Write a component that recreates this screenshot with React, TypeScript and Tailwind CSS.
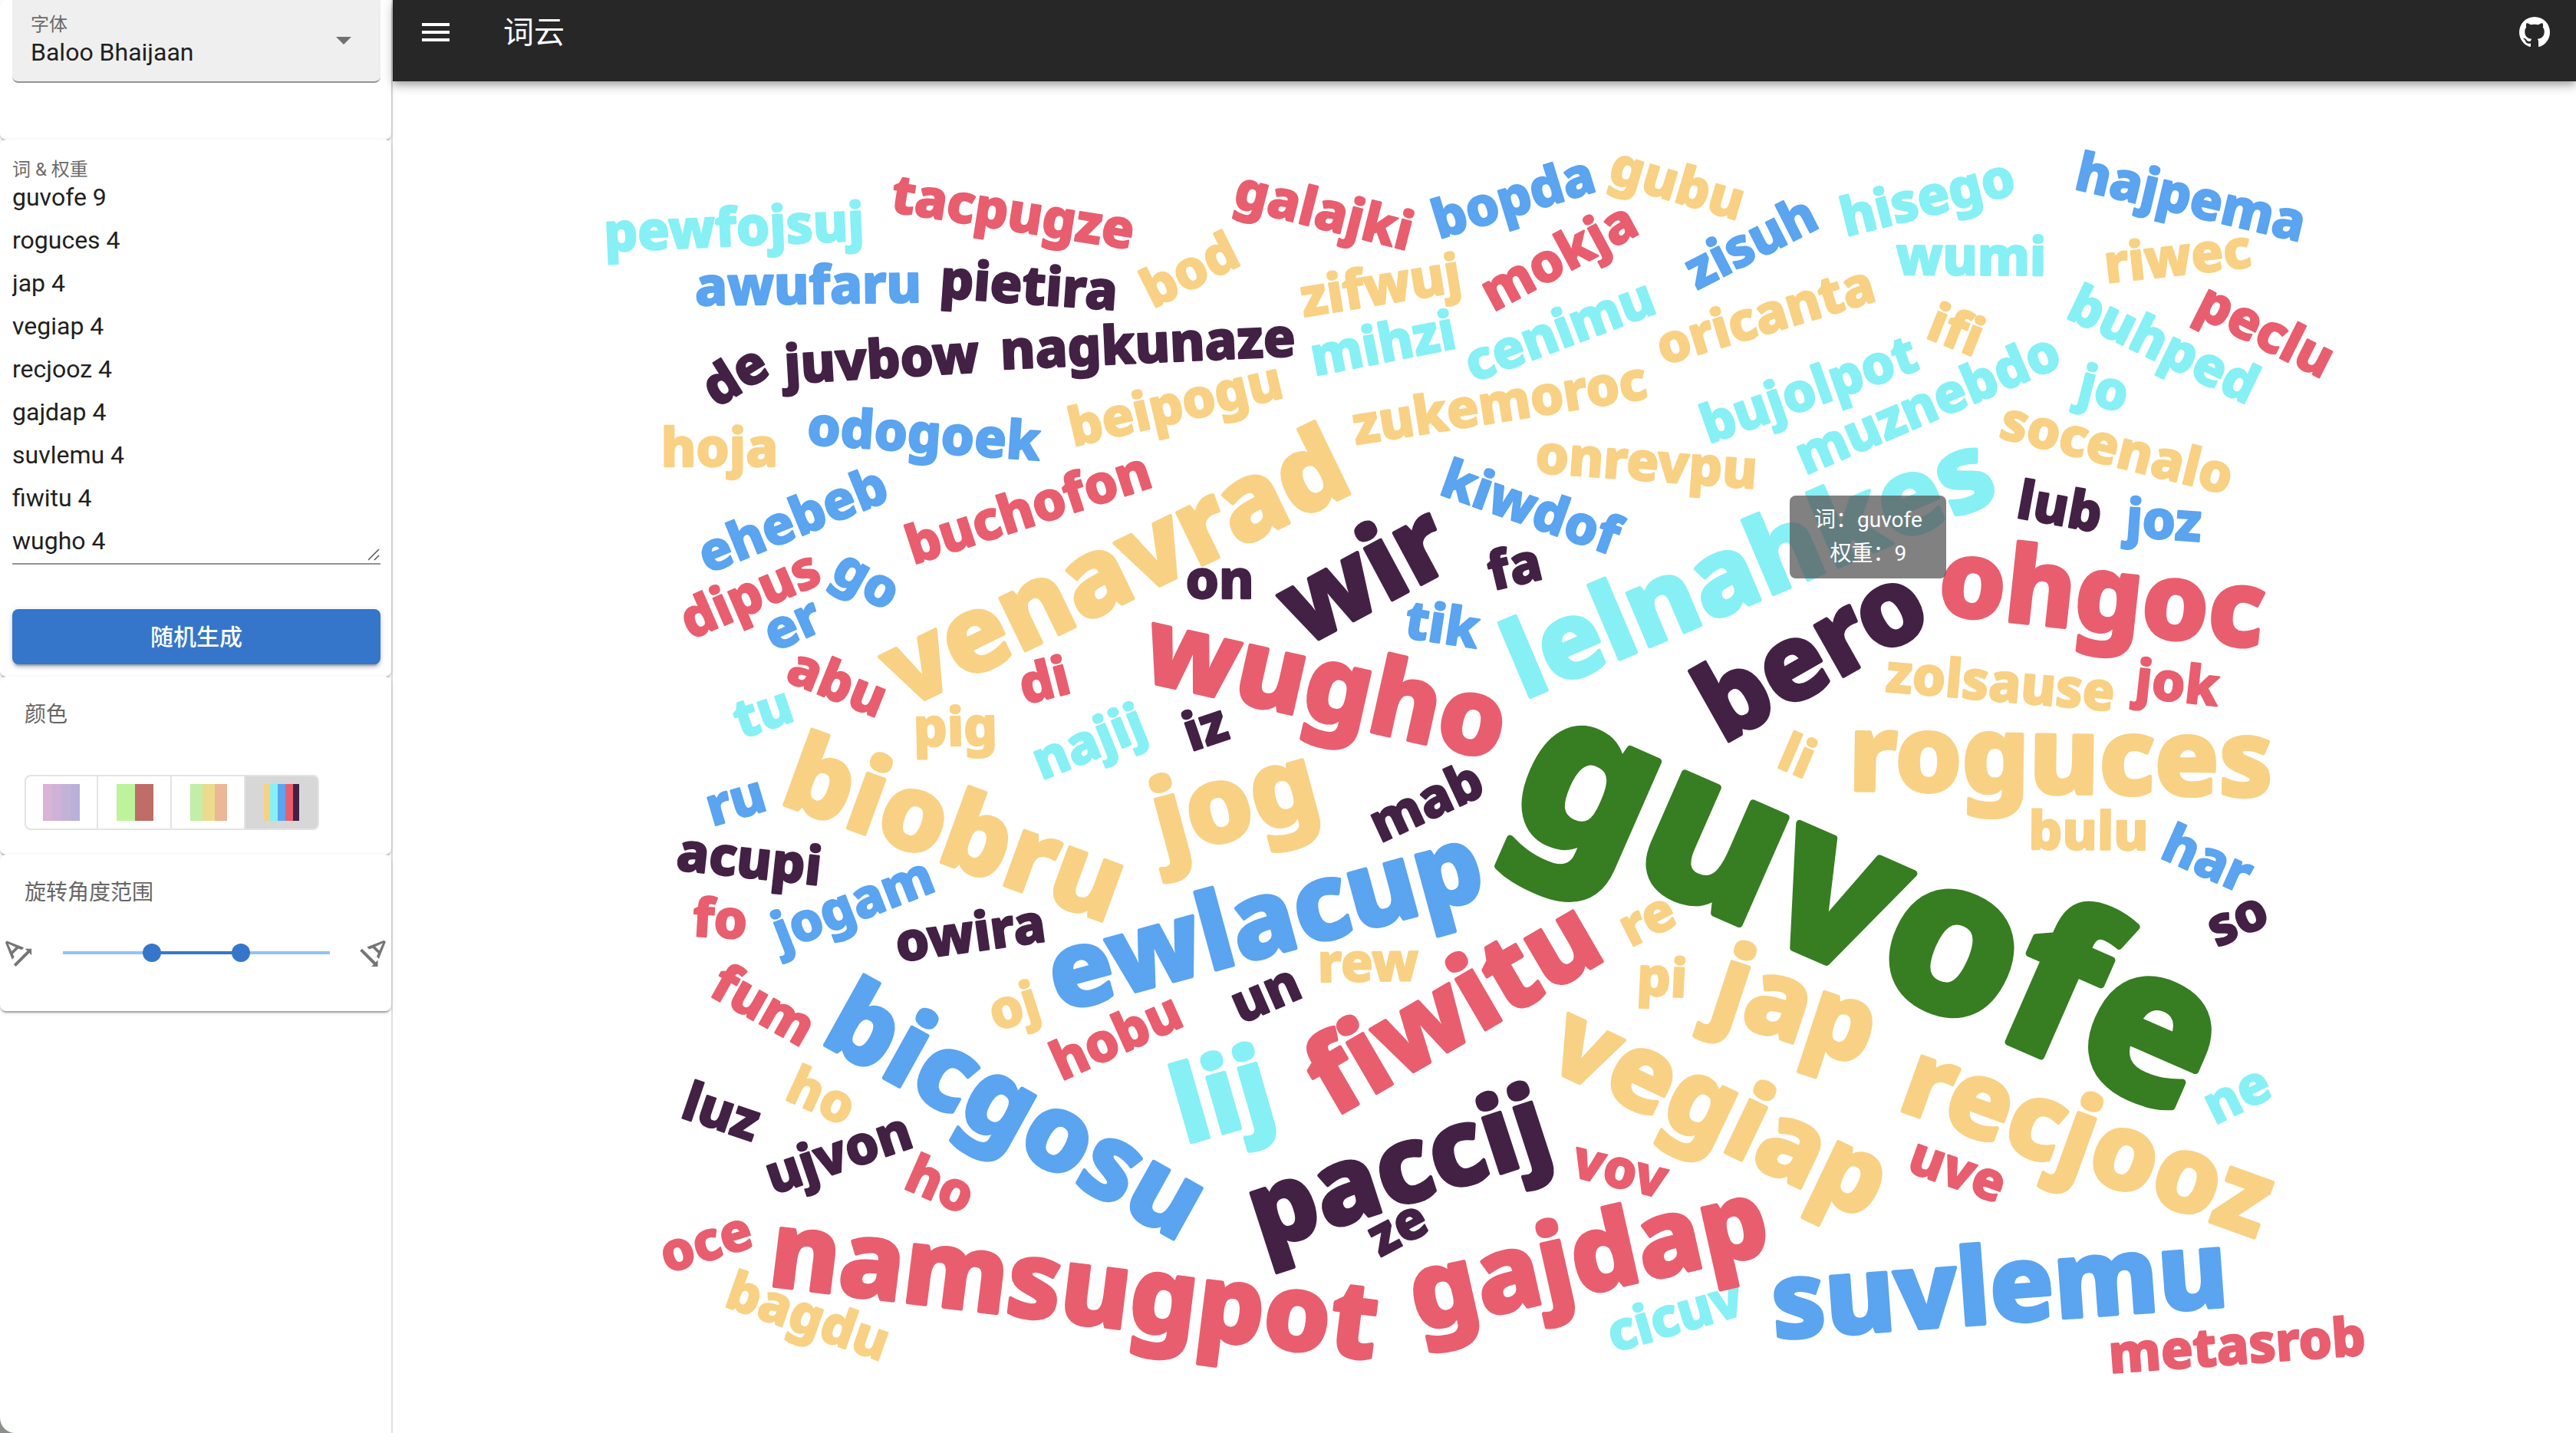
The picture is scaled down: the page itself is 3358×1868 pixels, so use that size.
import React, { useState } from 'react';
import { MdMenu } from 'react-icons/md';

/* Each word runs along a line from (x1, y1) to (x2, y2), level with the middle of its x-height. */
type Word = [text: string, x1: number, y1: number, x2: number, y2: number];

const YELLOW = '#f8d184';
const CYAN = '#86f0f5';
const BLUE = '#5aa4f0';
const RED = '#e85e6f';
const PLUM = '#432145';
const GREEN = '#377d22';

const groups: { color: string; size: number; words: Word[] }[] = [
  {
    color: CYAN,
    size: 69,
    words: [
      ['pewfojsuj', 785, 309, 1129, 294],
      ['hisego', 2402, 290, 2625, 234],
      ['wumi', 2477, 339, 2662, 340],
      ['mihzi', 1712, 471, 1895, 435],
      ['cenimu', 1916, 480, 2153, 390],
      ['buhped', 2699, 396, 2938, 511],
      ['bujolpot', 2218, 562, 2501, 462],
      ['muznebdo', 2346, 602, 2683, 459],
      ['jo', 2712, 504, 2771, 519],
      ['tu', 958, 946, 1034, 920],
      ['najij', 1348, 1001, 1494, 942],
      ['ne', 2878, 1450, 2958, 1411],
      ['cicuv', 2098, 1745, 2271, 1694],
    ],
  },
  {
    color: YELLOW,
    size: 69,
    words: [
      ['hoja', 865, 589, 1011, 589],
      ['bod', 1490, 388, 1616, 325],
      ['beipogu', 1394, 564, 1672, 499],
      ['gubu', 2101, 219, 2270, 269],
      ['zifwuj', 1694, 395, 1907, 360],
      ['oricanta', 2162, 458, 2443, 373],
      ['ifi', 2513, 421, 2583, 449],
      ['riwec', 2745, 350, 2933, 329],
      ['socenalo', 2606, 551, 2911, 627],
      ['zukemoroc', 1764, 561, 2147, 500],
      ['onrevpu', 2003, 597, 2289, 618],
      ['pig', 1194, 954, 1297, 952],
      ['zolsause', 2456, 882, 2759, 908],
      ['li', 2320, 981, 2362, 999],
      ['bulu', 2648, 1088, 2797, 1089],
      ['re', 2116, 1219, 2182, 1186],
      ['pi', 2136, 1278, 2197, 1281],
      ['rew', 1720, 1261, 1847, 1259],
      ['oj', 1290, 1327, 1356, 1306],
      ['ho', 1027, 1414, 1111, 1452],
      ['bagdu', 948, 1684, 1156, 1757],
    ],
  },
  {
    color: BLUE,
    size: 69,
    words: [
      ['awufaru', 909, 379, 1198, 375],
      ['odogoek', 1053, 560, 1355, 581],
      ['ehebeb', 914, 731, 1156, 633],
      ['bopda', 1869, 294, 2079, 230],
      ['zisuh', 2200, 363, 2369, 277],
      ['hajpema', 2710, 228, 3000, 296],
      ['kiwdof', 1876, 624, 2112, 708],
      ['go', 1090, 738, 1166, 781],
      ['er', 1001, 833, 1068, 803],
      ['tik', 1834, 812, 1925, 826],
      ['joz', 2772, 680, 2869, 687],
      ['har', 2822, 1100, 2930, 1148],
      ['ru', 923, 1059, 997, 1037],
      ['jogam', 1012, 1222, 1215, 1143],
    ],
  },
  {
    color: RED,
    size: 69,
    words: [
      ['tacpugze', 1164, 257, 1476, 306],
      ['galajki', 1612, 251, 1838, 308],
      ['mokja', 1938, 390, 2130, 287],
      ['peclu', 2866, 392, 3037, 478],
      ['buchofon', 1179, 720, 1505, 614],
      ['dipus', 889, 818, 1070, 740],
      ['abu', 1028, 869, 1152, 919],
      ['di', 1331, 900, 1394, 884],
      ['jok', 2788, 890, 2888, 901],
      ['fo', 903, 1201, 974, 1205],
      ['fum', 930, 1279, 1056, 1350],
      ['hobu', 1372, 1394, 1542, 1317],
      ['ho', 1182, 1530, 1266, 1567],
      ['oce', 863, 1642, 980, 1606],
      ['vov', 2050, 1514, 2172, 1544],
      ['uve', 2490, 1508, 2611, 1551],
      ['metasrob', 2751, 1771, 3082, 1747],
    ],
  },
  {
    color: PLUM,
    size: 69,
    words: [
      ['pietira', 1228, 369, 1454, 385],
      ['de', 921, 518, 1000, 469],
      ['juvbow', 1021, 481, 1278, 466],
      ['nagkunaze', 1309, 462, 1684, 445],
      ['on', 1548, 761, 1632, 761],
      ['fa', 1940, 752, 2011, 735],
      ['lub', 2633, 656, 2736, 675],
      ['iz', 1543, 963, 1602, 943],
      ['mab', 1791, 1082, 1931, 1017],
      ['so', 2880, 1219, 2956, 1185],
      ['acupi', 883, 1115, 1070, 1135],
      ['owira', 1169, 1235, 1362, 1208],
      ['un', 1607, 1319, 1696, 1280],
      ['luz', 892, 1438, 986, 1470],
      ['ujvon', 1000, 1540, 1189, 1476],
      ['ze', 1787, 1624, 1861, 1585],
    ],
  },
  {
    color: YELLOW,
    size: 138,
    words: [
      ['venavrad', 1163, 891, 1752, 606],
      ['roguces', 2413, 993, 2960, 1001],
      ['jap', 2238, 1288, 2439, 1354],
      ['vegiap', 2034, 1359, 2444, 1554],
      ['recjooz', 2480, 1409, 2958, 1581],
      ['jog', 1508, 1082, 1716, 1026],
      ['biobru', 1023, 1010, 1461, 1170],
    ],
  },
  {
    color: RED,
    size: 138,
    words: [
      ['wugho', 1501, 852, 1953, 953],
      ['ohgoc', 2528, 763, 2951, 808],
      ['fiwitu', 1712, 1430, 2086, 1212],
      ['namsugpot', 1009, 1639, 1790, 1735],
      ['gajdap', 1842, 1699, 2302, 1596],
    ],
  },
  {
    color: BLUE,
    size: 138,
    words: [
      ['ewlacup', 1371, 1284, 1931, 1132],
      ['bicgosu', 1082, 1324, 1559, 1589],
      ['suvlemu', 2316, 1708, 2898, 1666],
    ],
  },
  {
    color: PLUM,
    size: 138,
    words: [
      ['wir', 1682, 811, 1882, 704],
      ['bero', 2228, 938, 2504, 782],
      ['paccij', 1631, 1596, 2020, 1470],
    ],
  },
  {
    color: CYAN,
    size: 138,
    words: [
      ['lelnahkes', 1968, 880, 2599, 613],
      ['lij', 1531, 1457, 1660, 1420],
    ],
  },
  { color: GREEN, size: 276, words: [['guvofe', 1983, 998, 2882, 1392]] },
];

function WordCloud() {
  return (
    <svg
      viewBox="512 106 2846 1762"
      className="block w-full font-['Noto_Sans',sans-serif] font-extrabold"
      role="img"
      aria-label="词云"
    >
      {groups.map(({ color, size, words }) => (
        <g
          key={color + size}
          fill={color}
          stroke={color}
          strokeWidth={size / 30}
          strokeLinejoin="round"
          fontSize={size}
          textAnchor="middle"
        >
          {words.map(([text, x1, y1, x2, y2]) => (
            <text
              key={text}
              y={Math.round(size * 0.27)}
              transform={`translate(${(x1 + x2) / 2} ${(y1 + y2) / 2}) rotate(${(Math.atan2(y2 - y1, x2 - x1) * 180) / Math.PI})`}
            >
              {text}
            </text>
          ))}
        </g>
      ))}
    </svg>
  );
}

function AngleUpIcon() {
  return (
    <svg viewBox="0 0 24 24" className="size-12" fill="currentColor" aria-hidden="true">
      <path d="M4.49 4.21L3.43 5.27 7.85 16.4l1.48-1.48-.92-2.19 3.54-3.54 2.19.92 1.48-1.48L4.49 4.21zm3.09 6.8L5.36 6.14l4.87 2.23-2.65 2.64zm12.99-1.68h-4.24l1.41 1.41-8.84 8.84L10.32 21l8.84-8.84 1.41 1.41V9.33z" />
    </svg>
  );
}

function AngleDownIcon() {
  return (
    <svg viewBox="0 0 24 24" className="size-12" fill="currentColor" aria-hidden="true">
      <path d="M19.4 4.91l-1.06-1.06L7.2 8.27l1.48 1.48 2.19-.92 3.54 3.54-.92 2.19 1.48 1.48L19.4 4.91zm-6.81 3.1l4.87-2.23-2.23 4.87-2.64-2.64zM14.27 21v-4.24l-1.41 1.41-8.84-8.84-1.42 1.42 8.84 8.84L10.03 21h4.24z" />
    </svg>
  );
}

function GitHubIcon() {
  return (
    <svg viewBox="0 0 24 24" className="size-12" fill="currentColor" aria-hidden="true">
      <path d="M12,2A10,10 0 0,0 2,12C2,16.42 4.87,20.17 8.84,21.5C9.34,21.58 9.5,21.27 9.5,21C9.5,20.77 9.5,20.14 9.5,19.31C6.73,19.91 6.14,17.97 6.14,17.97C5.68,16.81 5.03,16.5 5.03,16.5C4.12,15.88 5.1,15.9 5.1,15.9C6.1,15.97 6.63,16.93 6.63,16.93C7.5,18.45 8.97,18 9.54,17.76C9.63,17.11 9.89,16.67 10.17,16.42C7.95,16.17 5.62,15.31 5.62,11.5C5.62,10.39 6,9.5 6.65,8.79C6.55,8.54 6.2,7.5 6.75,6.15C6.75,6.15 7.59,5.88 9.5,7.17C10.29,6.95 11.15,6.84 12,6.84C12.85,6.84 13.71,6.95 14.5,7.17C16.41,5.88 17.25,6.15 17.25,6.15C17.8,7.5 17.45,8.54 17.35,8.79C18,9.5 18.38,10.39 18.38,11.5C18.38,15.32 16.04,16.16 13.81,16.41C14.17,16.72 14.5,17.33 14.5,18.26C14.5,19.6 14.5,20.68 14.5,21C14.5,21.27 14.66,21.59 15.17,21.5C19.14,20.16 22,16.42 22,12A10,10 0 0,0 12,2Z" />
    </svg>
  );
}

const card =
  'rounded-lg bg-white shadow-[0_4px_2px_-2px_rgba(0,0,0,0.2),0_2px_2px_0_rgba(0,0,0,0.14),0_2px_6px_0_rgba(0,0,0,0.12)]';

const defaultWords = `guvofe 9
roguces 4
jap 4
vegiap 4
recjooz 4
gajdap 4
suvlemu 4
fiwitu 4
wugho 4`;

function FontCard() {
  return (
    <section className={`${card} h-[182px] pr-[14px] pl-4`}>
      <div className="relative flex h-[108px] flex-col rounded-b-lg border-b-2 border-[#949494] bg-[#efefef] pt-4">
        <label htmlFor="font" className="pl-6 text-2xl/8 text-[#6b6b6b]">
          字体
        </label>
        <select
          id="font"
          defaultValue="Baloo Bhaijaan"
          className="w-full appearance-none bg-transparent pl-6 text-[32px]/10 text-[#212121] outline-none"
        >
          <option>Baloo Bhaijaan</option>
        </select>
        <svg
          viewBox="0 0 20 10"
          className="pointer-events-none absolute top-12 right-[38px] h-[10px] w-5 fill-[#707070]"
          aria-hidden="true"
        >
          <path d="M0 0h20L10 10z" />
        </svg>
      </div>
    </section>
  );
}

function WordsCard() {
  return (
    <section className={`${card} flex h-[700px] flex-col pt-[23px] pr-[14px] pl-4`}>
      <label htmlFor="words" className="h-6 text-2xl/8 text-[#6b6b6b]">
        词 &amp; 权重
      </label>
      <div className="relative flex">
        <textarea
          id="words"
          rows={9}
          defaultValue={defaultWords}
          className="h-[507px] w-full resize-none overflow-hidden border-b-2 border-[#949494] bg-transparent text-[32px]/[56px] text-[#212121] outline-none"
        />
        <svg
          viewBox="0 0 16 16"
          className="absolute right-0 bottom-1 size-4 stroke-[#555] stroke-[1.5]"
          aria-hidden="true"
        >
          <path d="M0 14L14 0M8 14L14 8" />
        </svg>
      </div>
      <button
        type="button"
        className="mt-[58px] h-[72px] rounded-lg bg-[#3576ca] text-[30px] font-medium text-white shadow-[0_6px_2px_-4px_rgba(0,0,0,0.2),0_4px_4px_0_rgba(0,0,0,0.14),0_2px_10px_0_rgba(0,0,0,0.12)]"
      >
        随机生成
      </button>
    </section>
  );
}

function ColorCard() {
  const [selected, setSelected] = useState(3);
  const base = 'flex h-[72px] items-center border-y-2 border-r-2 border-[#e3e3e3]';
  const palettes = [
    {
      label: '紫色渐变',
      shape: 'w-24 rounded-l-lg border-l-2 pl-[22px]',
      bars: ['w-3 bg-[#dab3d7]', 'w-3 bg-[#ceb2d7]', 'w-3 bg-[#c3b2d7]', 'w-3 bg-[#b9b1d9]'],
    },
    { label: '红绿', shape: 'w-24 pl-6', bars: ['w-6 bg-[#bdf49b]', 'w-6 bg-[#c06c67]'] },
    {
      label: '柔和',
      shape: 'w-24 pl-6',
      bars: ['w-4 bg-[#c2eea7]', 'w-4 bg-[#ecdb8c]', 'w-4 bg-[#ebb797]'],
    },
    {
      label: '多彩',
      shape: 'w-24 rounded-r-lg pl-6',
      bars: [
        'w-2 bg-[#f8d184]',
        'w-[10px] bg-[#86f0f5]',
        'w-[10px] bg-[#5aa4f0]',
        'w-[10px] bg-[#e85e6f]',
        'w-2 bg-[#432145]',
      ],
    },
  ];
  return (
    <section className={`${card} h-[232px] px-8 pt-[30px]`}>
      <h2 className="text-[28px]/10 text-[#666]">颜色</h2>
      <div className="mt-[58px] flex" role="group" aria-label="颜色">
        {palettes.map((p, i) => (
          <button
            key={p.label}
            type="button"
            aria-label={p.label}
            aria-pressed={selected === i}
            onClick={() => setSelected(i)}
            className={`${base} ${p.shape} ${selected === i ? 'bg-[#d7d7d7]' : ''}`}
          >
            {p.bars.map((b) => (
              <span key={b} className={`h-12 ${b}`} />
            ))}
          </button>
        ))}
      </div>
    </section>
  );
}

const thumb =
  "pointer-events-none absolute inset-0 m-0 h-6 w-full appearance-none bg-transparent [&::-webkit-slider-thumb]:pointer-events-auto [&::-webkit-slider-thumb]:size-6 [&::-webkit-slider-thumb]:appearance-none [&::-webkit-slider-thumb]:rounded-full [&::-webkit-slider-thumb]:bg-[#3576ca]";

function AngleCard() {
  const [low, setLow] = useState(-30);
  const [high, setHigh] = useState(30);
  const percent = (v: number) => ((v + 90) / 180) * 100;
  return (
    <section className={`${card} h-[204px] pt-[30px]`}>
      <h2 className="pl-8 text-[28px]/10 text-[#666]">旋转角度范围</h2>
      <div className="-mr-0.5 mt-[34px] flex items-center text-[#757575]">
        <AngleUpIcon />
        <div className="relative mx-[22px] h-6 flex-1">
          <div className="mx-3 flex h-full items-center">
            <div className="relative h-1 w-full bg-[#93c1f8]">
              <div
                className="absolute h-1 bg-[#3576ca]"
                style={{ left: `${percent(low)}%`, width: `${percent(high) - percent(low)}%` }}
              />
            </div>
          </div>
          <input
            type="range"
            aria-label="最小角度"
            min={-90}
            max={90}
            value={low}
            onChange={(e) => setLow(Math.min(+e.target.value, high))}
            className={thumb}
          />
          <input
            type="range"
            aria-label="最大角度"
            min={-90}
            max={90}
            value={high}
            onChange={(e) => setHigh(Math.max(+e.target.value, low))}
            className={thumb}
          />
        </div>
        <AngleDownIcon />
      </div>
    </section>
  );
}

export default function App() {
  return (
    <div className="bg-[#8d8f8c] font-[Roboto,'Noto_Sans_CJK_SC',sans-serif]">
      <div className="flex min-h-screen rounded-bl-[20px] bg-white">
        <aside className="w-[512px] shrink-0 rounded-bl-[20px] border-r-2 border-[#e0e0e0]">
          <FontCard />
          <WordsCard />
          <ColorCard />
          <AngleCard />
        </aside>
        <div className="flex min-w-0 flex-1 flex-col">
          <header className="relative flex h-[106px] items-start bg-[#272727] pt-[18px] pr-[30px] pl-8 text-white shadow-[0_4px_8px_-2px_rgba(0,0,0,0.2),0_8px_10px_0_rgba(0,0,0,0.14),0_2px_20px_0_rgba(0,0,0,0.12)]">
            <button type="button" aria-label="菜单">
              <MdMenu className="size-12" />
            </button>
            <h1 className="ml-16 flex-1 text-[40px]/[50px]">词云</h1>
            <a href="https://github.com" aria-label="GitHub">
              <GitHubIcon />
            </a>
          </header>
          <main className="relative flex-1">
            <WordCloud />
            <div
              role="tooltip"
              className="absolute top-[540px] left-[64%] w-[204px] rounded-lg bg-[#575757]/75 py-[10px] text-center text-[28px]/[44px] text-white"
            >
              <p>词：guvofe</p>
              <p>权重：9</p>
            </div>
          </main>
        </div>
      </div>
    </div>
  );
}
